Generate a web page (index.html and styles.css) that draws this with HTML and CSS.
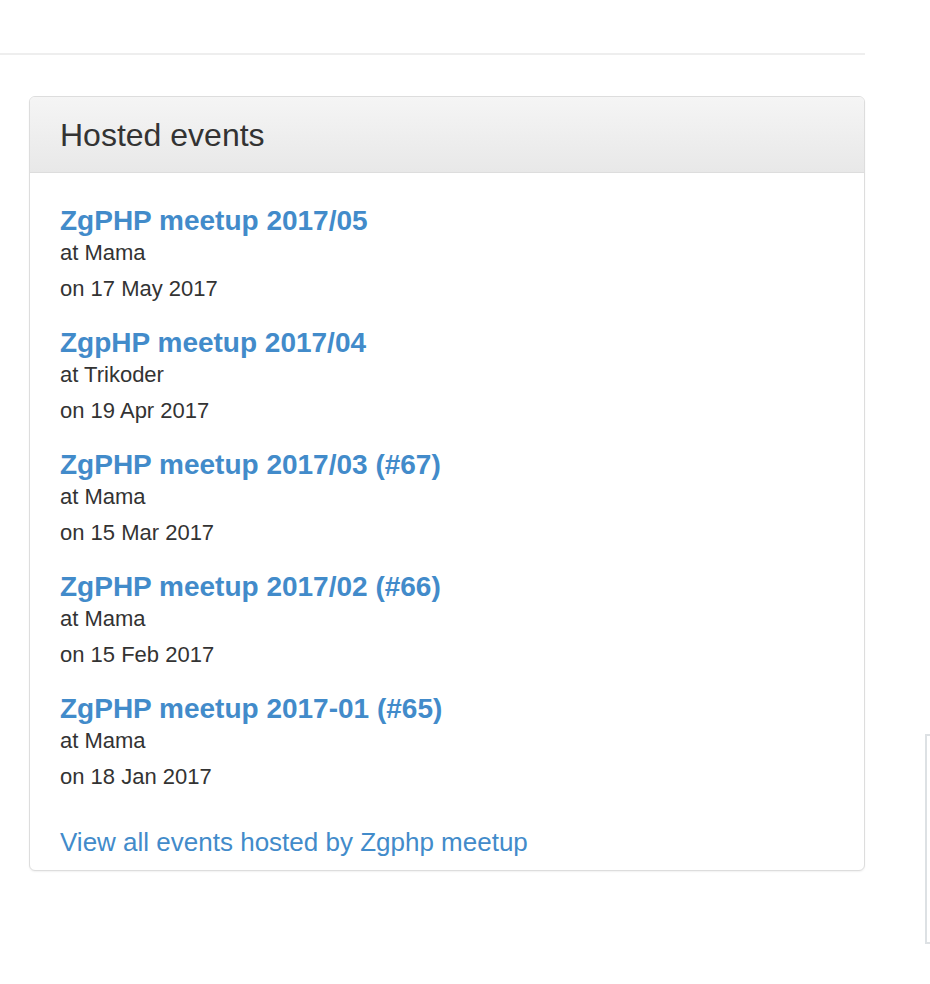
FILE: index.html
```html
<!DOCTYPE html>
<html>
<head>
<meta charset="utf-8">
<link rel="stylesheet" href="styles.css">
</head>
<body>
<div class="top-rule"></div>
<div class="row">
  <div class="panel">
    <div class="panel-heading"><h3 class="panel-title">Hosted events</h3></div>
    <div class="panel-body">
      <div class="event">
        <a class="event-title" href="#">ZgPHP meetup 2017/05</a>
        <div class="event-venue">at Mama</div>
        <div class="event-date">on 17 May 2017</div>
      </div>
      <div class="event">
        <a class="event-title" href="#">ZgpHP meetup 2017/04</a>
        <div class="event-venue">at Trikoder</div>
        <div class="event-date">on 19 Apr 2017</div>
      </div>
      <div class="event">
        <a class="event-title" href="#">ZgPHP meetup 2017/03 (#67)</a>
        <div class="event-venue">at Mama</div>
        <div class="event-date">on 15 Mar 2017</div>
      </div>
      <div class="event">
        <a class="event-title" href="#">ZgPHP meetup 2017/02 (#66)</a>
        <div class="event-venue">at Mama</div>
        <div class="event-date">on 15 Feb 2017</div>
      </div>
      <div class="event">
        <a class="event-title" href="#">ZgPHP meetup 2017-01 (#65)</a>
        <div class="event-venue">at Mama</div>
        <div class="event-date">on 18 Jan 2017</div>
      </div>
      <a class="view-all" href="#">View all events hosted by Zgphp meetup</a>
    </div>
  </div>
  <div class="side-box"></div>
</div>
</body>
</html>
```
FILE: styles.css
```css
html, body {
  margin: 0;
  padding: 0;
  background: #fff;
  overflow: hidden;
}
body {
  font-family: "Liberation Sans", Arial, sans-serif;
  color: #333;
  width: 930px;
  height: 984px;
}
.top-rule {
  margin-top: 53px;
  width: 865px;
  height: 2px;
  background: #eeeeee;
}
.row {
  display: flex;
  align-items: flex-start;
  margin-top: 41px;
  padding-left: 29px;
}
.panel {
  flex: 0 0 auto;
  width: 834px;
  border: 1.5px solid #dddddd;
  border-radius: 6px;
  box-shadow: 0 1px 2px rgba(0, 0, 0, 0.06);
  background: #fff;
}
.panel-heading {
  height: 75px;
  background: linear-gradient(to bottom, #f5f5f5 0%, #e8e8e8 100%);
  border-bottom: 1.5px solid #dddddd;
  border-radius: 5px 5px 0 0;
  padding-left: 30px;
}
.panel-title {
  margin: 0;
  font-size: 32px;
  font-weight: normal;
  line-height: 77px;
  color: #333;
}
.panel-body {
  padding: 33px 30px 13px 30px;
}
.event {
  margin-bottom: 24px;
}
.event-title {
  display: block;
  font-size: 28px;
  font-weight: bold;
  line-height: 30px;
  margin-bottom: 2px;
  color: #428bca;
  text-decoration: none;
}
.event-venue, .event-date {
  font-size: 22px;
  line-height: 30px;
}
.event-date {
  margin-top: 6px;
}
.view-all {
  display: block;
  margin-top: 35px;
  font-size: 26px;
  line-height: 30px;
  color: #428bca;
  text-decoration: none;
}
.side-box {
  flex: 0 0 auto;
  margin-left: 60px;
  margin-top: 638px;
  width: 3px;
  height: 206px;
  border: 2px solid #dde1e4;
  border-right: none;
}
```
